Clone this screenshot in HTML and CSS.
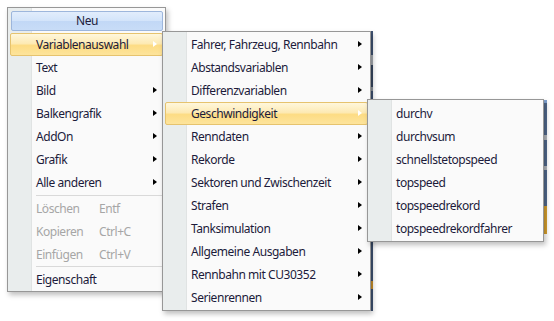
FILE: index.html
```html
<!DOCTYPE html>
<html lang="de">
<head>
  <meta charset="UTF-8">
  <title>Kontextmenü</title>
  <link rel="stylesheet" href="styles.css">
</head>
<body>
  <div class="desk">
    <!-- window edges peeking out behind the menus -->
    <div class="strip strip-a"></div>
    <div class="strip strip-b"></div>

    <!-- Main context menu -->
    <div class="menu menu-main">
      <div class="new-btn">Neu</div>
      <div class="item sub active">Variablenauswahl</div>
      <div class="item">Text</div>
      <div class="item sub">Bild</div>
      <div class="item sub">Balkengrafik</div>
      <div class="item sub">AddOn</div>
      <div class="item sub">Grafik</div>
      <div class="item sub">Alle anderen</div>
      <div class="sep"></div>
      <div class="item disabled"><span class="label">Löschen</span><span class="key">Entf</span></div>
      <div class="item disabled"><span class="label">Kopieren</span><span class="key">Ctrl+C</span></div>
      <div class="item disabled"><span class="label">Einfügen</span><span class="key">Ctrl+V</span></div>
      <div class="sep sep-thin"></div>
      <div class="item">Eigenschaft</div>
    </div>

    <!-- Variablenauswahl submenu -->
    <div class="menu menu-vars">
      <div class="item sub">Fahrer, Fahrzeug, Rennbahn</div>
      <div class="item sub">Abstandsvariablen</div>
      <div class="item sub">Differenzvariablen</div>
      <div class="item sub active">Geschwindigkeit</div>
      <div class="item sub">Renndaten</div>
      <div class="item sub">Rekorde</div>
      <div class="item sub">Sektoren und Zwischenzeit</div>
      <div class="item sub">Strafen</div>
      <div class="item sub">Tanksimulation</div>
      <div class="item sub">Allgemeine Ausgaben</div>
      <div class="item sub">Rennbahn mit CU30352</div>
      <div class="item sub">Serienrennen</div>
    </div>

    <!-- Geschwindigkeit submenu -->
    <div class="menu menu-speed">
      <div class="item">durchv</div>
      <div class="item">durchvsum</div>
      <div class="item">schnellstetopspeed</div>
      <div class="item">topspeed</div>
      <div class="item">topspeedrekord</div>
      <div class="item">topspeedrekordfahrer</div>
    </div>
  </div>
</body>
</html>
```

FILE: styles.css
```css
body {
  margin: 0;
  background: #fff;
  font-family: "Noto Sans", "Open Sans", sans-serif;
  font-size: 12px;
  letter-spacing: -0.45px;
  color: #1c1b3a;
}
.desk {
  position: relative;
  width: 554px;
  height: 321px;
  overflow: hidden;
}
.strip {
  position: absolute;
}
.strip-a {
  left: 371px;
  top: 31px;
  width: 2px;
  height: 280px;
  background: linear-gradient(to bottom, #3f5272 0 24px, #a7abb1 24px 34px, #384760 34px 56px, #8c939c 56px 60px, #3f5272 60px 250px, #c98f2a 250px 258px, #3f5272 258px);
}
.strip-b {
  left: 544px;
  top: 100px;
  width: 3px;
  height: 134px;
  background: linear-gradient(to bottom, #7fa2d0 0 3px, #51698c 3px 35px, #b4b8bd 35px 40px, #51698c 40px 66px, #b4b8bd 66px 70px, #51698c 70px 106px, #d7a02e 106px);
}
.menu {
  position: absolute;
  box-sizing: border-box;
  border: 1px solid #979797;
  background: linear-gradient(to right, #e9eded 0 23px, #e0e3e3 23px 24px, #fafafa 24px);
  box-shadow: 2px 3px 5px rgba(0, 0, 0, 0.25);
}
.menu-main {
  left: 7px;
  top: 7px;
  width: 159px;
  height: 285px;
  padding: 3px 2px 0;
}
.menu-vars {
  left: 162px;
  top: 31px;
  width: 209px;
  height: 280px;
  padding: 1px 2px;
}
.menu-speed {
  left: 367px;
  top: 99px;
  width: 177px;
  height: 143px;
  padding: 2px 2px;
}
.new-btn {
  height: 20px;
  line-height: 18px;
  margin: 0 0 2px 1px;
  box-sizing: border-box;
  border: 1px solid #9db6dc;
  border-radius: 2px;
  background: linear-gradient(to bottom, #e2edfc 0%, #d3e4fa 48%, #c2d8f6 52%, #c8dcf7 100%);
  text-align: center;
}
.item {
  position: relative;
  height: 23px;
  line-height: 21px;
  box-sizing: border-box;
  border: 1px solid transparent;
  border-radius: 2px;
  padding-left: 25px;
  white-space: nowrap;
}
.item.sub::after {
  content: "";
  position: absolute;
  right: 5px;
  top: 7px;
  border-left: 4px solid #000;
  border-top: 3.5px solid transparent;
  border-bottom: 3.5px solid transparent;
}
.item.active {
  border-color: #e6c36e;
  background: linear-gradient(to bottom, #fff7dc 0%, #fdeab4 45%, #fddc84 55%, #fde49c 100%);
}
.item.active::after {
  border-left-color: #fff;
}
.item.disabled {
  color: #a6a6a6;
}
.label {
  display: inline-block;
  width: 63px;
}
.sep {
  height: 1px;
  margin: 1px 0 1px 26px;
  background: #d9d9d9;
}
.sep.sep-thin {
  margin: 0 0 1px 26px;
}
```
